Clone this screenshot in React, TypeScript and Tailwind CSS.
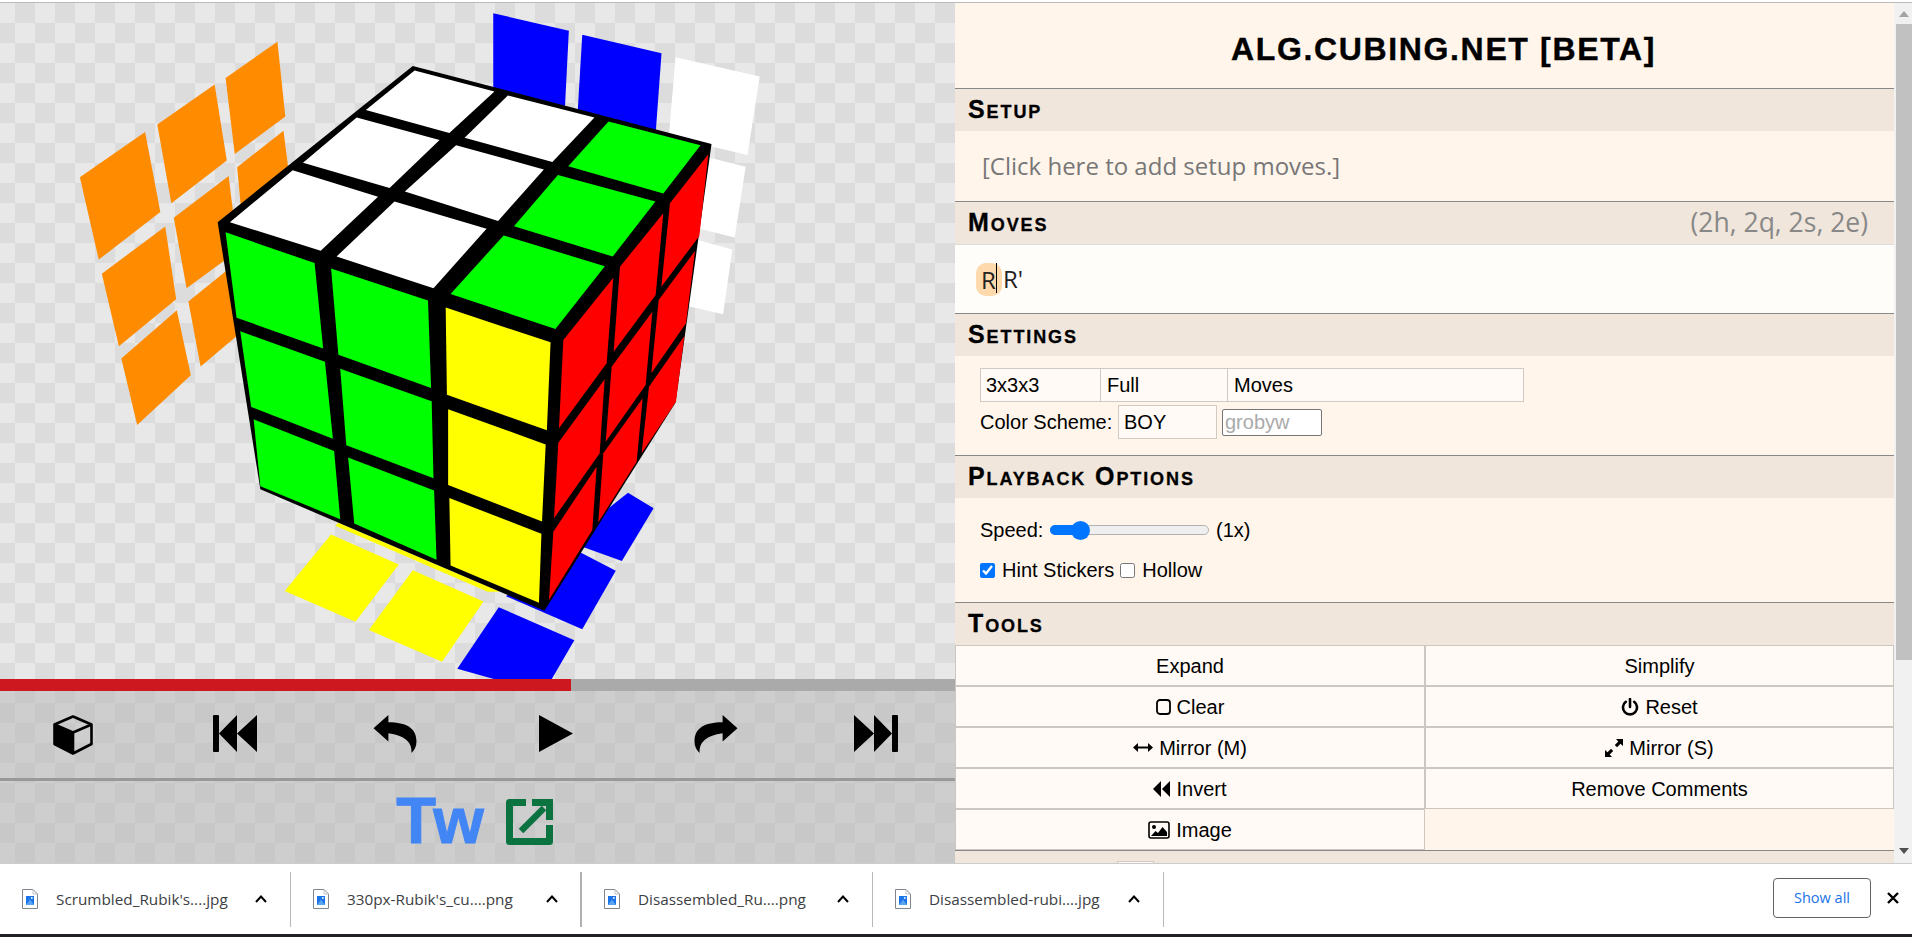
import { ReactNode } from 'react'

const ORANGE = '#ff8c00'
const YELLOW = '#ffff00'
const BLUE = '#0000ff'
const GREEN = '#00ff00'
const WHITE = '#ffffff'

// hint stickers + stickers, measured off the reference
const backStickers: [string, string][] = [
  [ORANGE, '455,95 468,265 385,350 370,177'],
  [ORANGE, '352,192 372,365 281,462 258,283'],
  [ORANGE, '238,300 263,482 162,590 131,403'],
  [ORANGE, '465,297 480,460 400,545 389,380'],
  [ORANGE, '375,400 390,570 306,655 285,495'],
  [ORANGE, '271,515 289,680 195,787 167,622'],
  [ORANGE, '385,600 400,750 329,833 309,685'],
  [ORANGE, '290,705 313,853 225,966 199,815'],
  [BLUE, '809,30 933,70 926,260 809,220'],
  [BLUE, '955,79 1085,121 1075,310 947,265'],
  [WHITE, '1108,130 1246,174 1226,352 1097,310'],
  [WHITE, '1140,350 1223,379 1205,540 1120,510'],
  [WHITE, '1130,540 1201,567 1186,714 1110,690'],
  [BLUE, '1030,1120 1072,1155 1020,1275 930,1230'],
  [BLUE, '930,1240 1010,1297 955,1430 830,1355'],
  [BLUE, '818,1380 942,1455 905,1543 810,1543 750,1520'],
  [YELLOW, '543,1215 654,1283 583,1413 467,1343'],
  [YELLOW, '677,1296 793,1367 725,1504 605,1432'],
  [YELLOW, '555,1188 820,1345 800,1345 550,1195'],
]

const frontStickers: [string, string][] = [
  [WHITE, '680,160 811,208 737,302 600,250'],
  [WHITE, '833,217 975,267 906,368 762,313'],
  [GREEN, '998,276 1149,330 1088,440 932,378'],
  [WHITE, '585,267 721,318 639,427 497,370'],
  [WHITE, '748,330 892,385 817,502 664,435'],
  [GREEN, '915,398 1075,458 1005,583 843,514'],
  [WHITE, '480,387 620,447 526,570 377,505'],
  [WHITE, '647,458 798,520 711,655 552,583'],
  [GREEN, '826,535 992,605 911,748 739,668'],
  [GREEN, '370,528 516,598 530,792 388,722'],
  [GREEN, '543,610 702,683 707,882 555,806'],
  [YELLOW, '731,699 903,778 897,978 733,897'],
  [GREEN, '394,753 533,822 546,997 412,925'],
  [GREEN, '558,838 708,912 711,1087 568,1012'],
  [YELLOW, '735,930 895,1010 889,1185 735,1102'],
  [GREEN, '416,953 548,1025 558,1180 427,1105'],
  [GREEN, '571,1040 712,1115 716,1272 581,1190'],
  [YELLOW, '737,1132 888,1213 884,1370 739,1285'],
]

const redStickers = [
  '190,660 340,473 320,730 177,925',
  '360,440 490,280 467,525 341,695',
  '510,250 625,103 598,348 484,500',
  '175,968 314,778 299,1000 162,1195',
  '335,740 457,575 437,795 317,965',
  '476,540 585,393 558,610 454,760',
  '160,1235 290,1040 277,1230 147,1440',
  '310,1000 428,835 410,1025 295,1207',
  '447,800 553,648 528,845 425,1000',
]

function Cube() {
  return (
    <svg viewBox="0 0 955 676" className="w-[955px] h-[676px] block">
      <g transform="translate(0,-3)">
        <g transform="scale(0.6097,0.44)">
          {backStickers.map(([fill, points]) => (
            <polygon key={points} fill={fill} points={points} />
          ))}
          <polygon fill="#000" points="677,150 1167,327 1108,915 893,1388 427,1112 357,505" />
          {frontStickers.map(([fill, points]) => (
            <polygon key={points} fill={fill} points={points} />
          ))}
        </g>
        <g transform="translate(500,120) scale(0.3333)">
          {redStickers.map((points) => (
            <polygon key={points} fill="#ff0000" points={points} />
          ))}
        </g>
      </g>
    </svg>
  )
}

function Controls() {
  return (
    <div className="h-[90px] flex items-start justify-between pl-[53px] pr-[57px] pt-[24px] bg-fixed bg-[position:-5px_3px] bg-[length:40px_40px] bg-[conic-gradient(#c8c8c8_25%,#cecece_0_50%,#c8c8c8_0_75%,#cecece_0)] border-b-[3px] border-[#999999]">
      <svg viewBox="0 0 40 40" className="w-[40px] h-[40px] mr-[4px]">
        <path d="M1.5 10 20 18V38.5L1.5 29Z" fill="#000" />
        <path d="M20 1.5 38.5 9.5V29L20 38.5 1.5 29V9.5ZM1.5 9.5 20 17.5 38.5 9.5M20 17.5V38.5" fill="none" stroke="#000" strokeWidth="2.6" strokeLinejoin="round" />
      </svg>
      <svg viewBox="0 0 44 37" className="w-[44px] h-[37px]">
        <rect x="0" y="0" width="6" height="37" rx="1" fill="#000" />
        <path d="M6 18.5 24 0V37ZM24 18.5 44 0V37Z" fill="#000" />
      </svg>
      <svg viewBox="0 0 130 115" className="w-[44px] h-[38px]">
        <path d="M0 40 45 0V22C100 22 130 40 130 80Q130 100 115 115 118 65 45 55V80Z" fill="#000" />
      </svg>
      <svg viewBox="0 0 44 37" className="w-[44px] h-[37px]">
        <path d="M5 0 39 18.5 5 37Z" fill="#000" />
      </svg>
      <svg viewBox="0 0 130 115" className="w-[44px] h-[38px]">
        <path d="M130 40 85 0V22C30 22 0 40 0 80Q0 100 15 115 12 65 85 55V80Z" fill="#000" />
      </svg>
      <svg viewBox="0 0 44 37" className="w-[44px] h-[37px]">
        <rect x="38" y="0" width="6" height="37" rx="1" fill="#000" />
        <path d="M38 18.5 20 0V37ZM20 18.5 0 0V37Z" fill="#000" />
      </svg>
    </div>
  )
}

function TwitterLinks() {
  return (
    <div className="flex-1 flex items-start justify-center gap-[20px] pr-[6px] pt-[2px] bg-fixed bg-[position:-5px_3px] bg-[length:40px_40px] bg-[conic-gradient(#c8c8c8_25%,#cecece_0_50%,#c8c8c8_0_75%,#cecece_0)]">
      <span className="text-[65px] leading-[75px] font-bold tracking-[2px] text-[#4285f4] [-webkit-text-stroke:1px_#4285f4]">Tw</span>
      <svg viewBox="0 0 47 46" className="w-[47px] h-[46px] mt-[16px]">
        <path d="M20 3.5H3.5V42.5H43.5V26" fill="none" stroke="#0b7340" strokeWidth="7" strokeLinejoin="round" />
        <path d="M15 32 38 9" fill="none" stroke="#0b7340" strokeWidth="6.5" />
        <path d="M26 0H47V21H40V7H26Z" fill="#0b7340" />
      </svg>
    </div>
  )
}

function Section({ title, right, children }: { title: string; right?: ReactNode; children?: ReactNode }) {
  return (
    <section className="border-t border-[#888888]">
      <div className="h-[42px] pl-[13px] pr-[12px] bg-[#f0e6dc] flex items-center justify-between">
        <h2 className="pb-[1px] text-[25px] font-bold tracking-[1.9px] text-black [font-variant:small-caps] [-webkit-text-stroke:0.3px_#000]">
          {title}
        </h2>
        {right}
      </div>
      {children}
    </section>
  )
}

function Cell({ className, children }: { className: string; children: ReactNode }) {
  return (
    <div className={`h-[34px] flex items-center bg-[#fffaf5] border border-[#d0cac3] ${className}`}>
      {children}
    </div>
  )
}

function ToolButton({ icon, label }: { icon?: ReactNode; label: string }) {
  return (
    <button className="h-[41px] flex items-center justify-center gap-[6px] bg-[#fffaf5] border border-[#ccc7c0] text-[20px] text-black">
      {icon}
      {label}
    </button>
  )
}

const toolIcons = {
  clear: (
    <svg viewBox="0 0 15 16" className="w-[15px] h-[16px]">
      <rect x="1" y="1" width="13" height="14" rx="3" fill="none" stroke="#000" strokeWidth="1.8" />
    </svg>
  ),
  reset: (
    <svg viewBox="0 0 18 18" className="w-[18px] h-[18px]">
      <path d="M9 1v8M4.8 3.8a7 7 0 1 0 8.4 0" fill="none" stroke="#000" strokeWidth="2.6" strokeLinecap="round" />
    </svg>
  ),
  mirrorM: (
    <svg viewBox="0 0 20 9" className="w-[20px] h-[9px]">
      <path d="M0 4.5 5 0V3.4H15V0L20 4.5 15 9V5.6H5V9Z" fill="#000" />
    </svg>
  ),
  mirrorS: (
    <svg viewBox="0 0 18 18" className="w-[18px] h-[18px]">
      <path d="M18 0V7L15.5 4.7 12 8.2 9.8 6 13.3 2.5 11 0ZM0 18V11L2.5 13.3 6 9.8 8.2 12 4.7 15.5 7 18Z" fill="#000" />
    </svg>
  ),
  invert: (
    <svg viewBox="0 0 17 16" className="w-[17px] h-[16px]">
      <path d="M0 8 8 0V16ZM9 8 17 0V16Z" fill="#000" />
    </svg>
  ),
  image: (
    <svg viewBox="0 0 22 18" className="w-[22px] h-[18px]">
      <rect x="1" y="1" width="20" height="16" rx="2" fill="none" stroke="#000" strokeWidth="1.6" />
      <circle cx="6" cy="6" r="2" fill="#000" />
      <path d="M3 15 7.5 10 10 12 14.5 6 19 11V15Z" fill="#000" />
    </svg>
  ),
}

function FileIcon() {
  return (
    <svg viewBox="0 0 16 20" className="w-[16px] h-[20px] shrink-0">
      <path d="M.5.5H11L15.5 5V19.5H.5Z" fill="#fff" stroke="#80868b" />
      <path d="M11 .5V5H15.5" fill="none" stroke="#bdc1c6" />
      <rect x="4" y="7" width="8" height="9" fill="#1a73e8" />
      <path d="M4 16 8 10.5 12 16Z" fill="#5aa4f0" />
      <circle cx="9.8" cy="9" r="1" fill="#e8f0fe" />
    </svg>
  )
}

function DownloadItem({ name, sepClass }: { name: string; sepClass: string }) {
  return (
    <div className="w-[291px] h-[55px] shrink-0 flex items-center pl-[22px] border-r border-[#b9b9b9] relative">
      <FileIcon />
      <span className="ml-[18px] w-[199px] text-[15.3px] text-[#3c4043] font-['Open_Sans',sans-serif] whitespace-nowrap">
        {name}
      </span>
      <svg viewBox="0 0 12 8" className="w-[12px] h-[8px]">
        <path d="M1 7 6 1.5 11 7" fill="none" stroke="#000" strokeWidth="2" />
      </svg>
      <span className={sepClass} />
    </div>
  )
}

function ScrollBar() {
  return (
    <div className="w-[18px] bg-[#f1f1f1] flex flex-col items-end">
      <div className="h-[21px] w-full flex items-center justify-center">
        <svg viewBox="0 0 10 6" className="w-[10px] h-[6px] ml-[2px]">
          <path d="M5 0 10 6H0Z" fill="#a3a3a3" />
        </svg>
      </div>
      <div className="w-[16px] h-[636px] bg-[#c1c1c1]" />
      <div className="flex-1 w-full flex items-end justify-center pb-[9px]">
        <svg viewBox="0 0 10 6" className="w-[10px] h-[6px] ml-[2px]">
          <path d="M0 0H10L5 6Z" fill="#505050" />
        </svg>
      </div>
    </div>
  )
}

export default function App() {
  return (
    <div className="h-screen w-full flex flex-col overflow-hidden bg-white font-['Liberation_Sans',Arial,sans-serif]">
      <div className="h-[3px] shrink-0 bg-white border-b border-[#bbbbbb]" />
      <div className="h-[860px] shrink-0 flex">
        <div className="w-[955px] shrink-0 flex flex-col bg-fixed bg-[position:-5px_3px] bg-[length:40px_40px] bg-[conic-gradient(#dcdcdc_25%,#e8e8e8_0_50%,#dcdcdc_0_75%,#e8e8e8_0)]">
          <Cube />
          <div className="h-[12px] shrink-0 bg-[#aaaaaa]">
            <div className="h-full w-[571px] bg-[#cc181e]" />
          </div>
          <Controls />
          <TwitterLinks />
        </div>

        <main className="flex-1 overflow-hidden bg-[#fff5eb] text-[20px] text-black">
          <h1 className="h-[85px] pl-[38px] pt-[7px] flex items-center justify-center text-[32px] font-bold tracking-[1.65px] [-webkit-text-stroke:0.4px_#000]">
            ALG.CUBING.NET [BETA]
          </h1>
          <Section title="Setup">
            <div className="h-[70px] pl-[27px] flex items-center text-[24px] text-[#777777] font-['Open_Sans',sans-serif]">
              [Click here to add setup moves.]
            </div>
          </Section>
          <Section
            title="Moves"
            right={<span className="text-[26.5px] text-[#888888] pr-[14px] font-['Open_Sans',sans-serif]">(2h, 2q, 2s, 2e)</span>}
          >
            <div className="h-[69px] bg-[#fffdfa] border-t border-[#dddddd] pl-[21px] flex items-center text-[24px] text-[#222222] font-['Open_Sans',sans-serif]">
              <span className="w-[26px] h-[33px] rounded-[10px] bg-[#fed9ab] pl-[5px] leading-[33px] relative">
                R
                <span className="absolute left-[20px] top-0 h-[30px] w-px bg-black" />
              </span>
              <span className="ml-px">R'</span>
            </div>
          </Section>
          <Section title="Settings">
            <div className="h-[99px] pl-[25px] pt-[12px]">
              <div className="flex">
                <Cell className="w-[121px] pl-[5px]">3x3x3</Cell>
                <Cell className="w-[127px] pl-[6px] border-l-0">Full</Cell>
                <Cell className="w-[296px] pl-[6px] border-l-0">Moves</Cell>
              </div>
              <div className="flex items-center mt-[3px]">
                <span className="w-[138px]">Color Scheme:</span>
                <Cell className="w-[99px] pl-[5px]">BOY</Cell>
                <input
                  placeholder="grobyw"
                  className="ml-[5px] w-[100px] h-[27px] px-[2px] bg-white border border-[#767676] rounded-[2px] text-[20px] placeholder:text-[#aaaaaa]"
                />
              </div>
            </div>
          </Section>
          <Section title="Playback Options">
            <div className="h-[104px] pl-[25px] pt-[22px]">
              <div className="flex items-center h-[20px]">
                <span className="w-[70px]">Speed:</span>
                <div className="w-[159px] h-[10px] rounded-full bg-[#efefef] border border-[#b2b2b2] relative">
                  <div className="absolute -left-px -top-px h-[10px] w-[30px] rounded-full bg-[#0075ff]" />
                  <div className="absolute left-[20px] -top-[5px] w-[19px] h-[19px] rounded-full bg-[#0075ff]" />
                </div>
                <span className="ml-[7px]">(1x)</span>
              </div>
              <div className="flex items-center mt-[18px] h-[24px]">
                <input type="checkbox" defaultChecked className="w-[15px] h-[15px] m-0 accent-[#0075ff]" />
                <span className="ml-[7px]">Hint Stickers</span>
                <input type="checkbox" className="w-[15px] h-[15px] ml-[6px] accent-[#0075ff]" />
                <span className="ml-[7px]">Hollow</span>
              </div>
            </div>
          </Section>
          <Section title="Tools">
            <div className="grid grid-cols-[470px_1fr]">
              <ToolButton label="Expand" />
              <ToolButton label="Simplify" />
              <ToolButton icon={toolIcons.clear} label="Clear" />
              <ToolButton icon={toolIcons.reset} label="Reset" />
              <ToolButton icon={toolIcons.mirrorM} label="Mirror (M)" />
              <ToolButton icon={toolIcons.mirrorS} label="Mirror (S)" />
              <ToolButton icon={toolIcons.invert} label="Invert" />
              <ToolButton label="Remove Comments" />
              <ToolButton icon={toolIcons.image} label="Image" />
            </div>
          </Section>
          <section className="border-t border-[#888888] h-[42px] bg-[#f0e6dc] pl-[13px] flex items-start pt-[10px]">
            <h2 className="w-[149px] text-[25px] leading-[25px] font-bold tracking-[1.9px] [font-variant:small-caps]">Examples</h2>
            <div className="w-[37px] h-[30px] bg-[#fffaf5] border border-[#d0cac3]" />
          </section>
        </main>
        <ScrollBar />
      </div>

      <footer className="h-[71px] shrink-0 bg-white border-t border-[#cccccc] flex items-center">
        <DownloadItem name="Scrumbled_Rubik's....jpg" sepClass="" />
        <DownloadItem name="330px-Rubik's_cu....png" sepClass="absolute -right-px top-0 h-full w-[2px] bg-[#b0b0b0]" />
        <DownloadItem name="Disassembled_Ru....png" sepClass="" />
        <DownloadItem name="Disassembled-rubi....jpg" sepClass="" />
        <div className="ml-auto flex items-center mb-[2px]">
          <button className="w-[98px] h-[40px] border border-[#5f6368] rounded-[4px] text-[14.5px] text-[#1a73e8] font-['Open_Sans',sans-serif]">
            Show all
          </button>
          <svg viewBox="0 0 12 12" className="w-[12px] h-[12px] ml-[16px] mr-[13px]">
            <path d="M1 1 11 11M11 1 1 11" stroke="#000" strokeWidth="2.4" />
          </svg>
        </div>
      </footer>
      <div className="flex-1 bg-[#202124]" />
    </div>
  )
}
